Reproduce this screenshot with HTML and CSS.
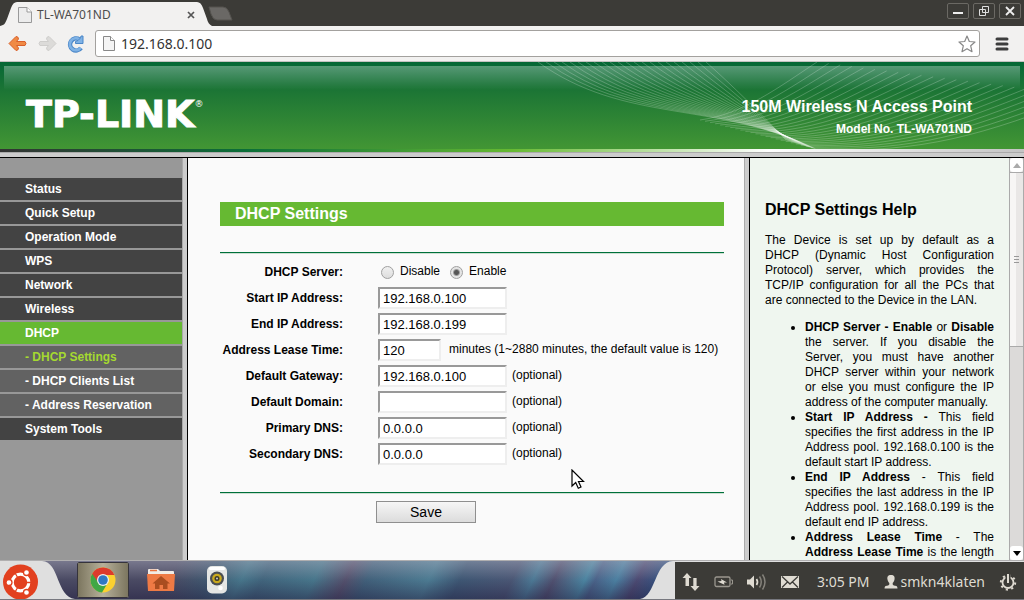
FILE: index.html
```html
<!DOCTYPE html>
<html lang="en">
<head>
    <meta charset="UTF-8">
    <meta name="viewport" content="width=device-width, initial-scale=1.0">
    <title>TL-WA701ND</title>
    <link rel="stylesheet" href="styles.css">
</head>
<body>
    <!-- Tab bar -->
    <div class="tabbar">
        <div class="tab">
            <svg class="tab-shape" width="212" height="26" viewBox="0 0 212 26"><path d="M0 26 C5 25 5 23 7 19 L11 8 Q13 2 17 2 H197 Q201 2 203 8 L207 19 Q208 24 212 26 Z" fill="#f2f1f0"/></svg>
            <svg class="page-icon" width="14" height="16" viewBox="0 0 14 16"><path d="M.5 .5 H9 L13.500 5 V15.500 H.5 Z" fill="#ececec" stroke="#999"/><path d="M9 .5 V5 H13.500" fill="#fff" stroke="#999"/></svg>
            <span class="tab-title">TL-WA701ND</span>
            <button class="tab-close" aria-label="Close tab"><svg width="8" height="8" viewBox="0 0 8 8"><path d="M1 1 L7 7 M7 1 L1 7" stroke="#555" stroke-width="1.700"/></svg></button>
        </div>
        <button class="new-tab" aria-label="New tab"><svg width="26" height="16" viewBox="0 0 26 16"><path d="M2 1 H16 Q20 1 22 6 L25 14 H10 Q6 14 4 8 Z" fill="#6a6865" stroke="#55534f"/></svg></button>
        <div class="window-buttons">
            <button aria-label="Minimize"><svg width="12" height="12" viewBox="0 0 12 12"><path d="M1 8 H11" stroke="#eee" stroke-width="2"/></svg></button>
            <button aria-label="Restore"><svg width="12" height="12" viewBox="0 0 12 12"><path d="M4.500 1.500 H10.500 V7.500 H4.500 Z M1.500 4.500 H7.500 V10.500 H1.500 Z" fill="none" stroke="#ddd"/></svg></button>
            <button aria-label="Close"><svg width="12" height="12" viewBox="0 0 12 12"><path d="M2 2 L10 10 M10 2 L2 10" stroke="#eee" stroke-width="1.800"/></svg></button>
        </div>
    </div>

    <!-- Toolbar -->
    <div class="toolbar">
        <button class="tool" aria-label="Back"><svg width="20" height="18" viewBox="0 0 20 18"><path d="M1 8.500 L8 1.500 Q10.500 1.500 10.500 4 L8.500 6.500 H17 Q19 8.500 17 10.500 H8.500 L10.500 13 Q10.500 15.500 8 15.500 Z" fill="#f08a45" stroke="#d9602a" stroke-linejoin="round"/></svg></button>
        <button class="tool" aria-label="Forward"><svg width="20" height="18" viewBox="0 0 20 18"><path d="M19 8.500 L12 1.500 Q9.500 1.500 9.500 4 L11.500 6.500 H3 Q1 8.500 3 10.500 H11.500 L9.500 13 Q9.500 15.500 12 15.500 Z" fill="#dcdbd9" stroke="#cfcecc" stroke-linejoin="round"/></svg></button>
        <button class="tool" aria-label="Reload"><svg width="20" height="18" viewBox="0 0 20 18"><path d="M15 13 A6 6 0 1 1 13.500 4.500" fill="none" stroke="#4b87c8" stroke-width="4.500"/><path d="M14.700 12.700 A6 6 0 1 1 13.500 4.500" fill="none" stroke="#7fb2e5" stroke-width="2.700"/><path d="M17 1 V8.500 H9.500 V6.500 L12 5.500 L14.500 3 L15 1 Z" fill="#7fb2e5" stroke="#4b87c8"/></svg></button>
        <div class="address">
            <svg width="12" height="15" viewBox="0 0 12 15"><path d="M.5 .5 H7.500 L11.500 4.500 V14.500 H.5 Z" fill="#f4f4f4" stroke="#888"/><path d="M7.500 .5 V4.500 H11.500" fill="#fff" stroke="#888"/></svg>
            <input type="text" aria-label="Address" value="192.168.0.100">
            <svg width="18" height="18" viewBox="0 0 18 18"><path d="M9 1 L11.300 6.500 L17 7 L12.700 10.800 L14 16.700 L9 13.700 L4 16.700 L5.300 10.800 L1 7 L6.700 6.500 Z" fill="#fff" stroke="#888" stroke-width="1.200" stroke-linejoin="round"/></svg>
        </div>
        <button class="menu-button" aria-label="Menu"><svg width="14" height="14" viewBox="0 0 14 14"><path d="M2 2 H12 M2 7 H12 M2 12 H12" stroke="#3d3d3d" stroke-width="3" stroke-linecap="round"/></svg></button>
    </div>

    <!-- Banner -->
    <header class="banner">
        <div class="shine"></div>
        <svg class="waves" id="waves" width="500" height="87" viewBox="0 0 500 87"></svg>
        <div class="logo">TP-LINK<sup>®</sup></div>
        <div class="product">
            <h1>150M Wireless N Access Point</h1>
            <p>Model No. TL-WA701ND</p>
        </div>
    </header>
    <div class="stripe"></div>
    <div class="frame-line"></div>

    <div class="content">
        <nav class="sidebar">
            <a href="#">Status</a>
            <a href="#">Quick Setup</a>
            <a href="#">Operation Mode</a>
            <a href="#">WPS</a>
            <a href="#">Network</a>
            <a href="#">Wireless</a>
            <a href="#" class="active">DHCP</a>
            <a href="#" class="sub current">- DHCP Settings</a>
            <a href="#" class="sub">- DHCP Clients List</a>
            <a href="#" class="sub">- Address Reservation</a>
            <a href="#">System Tools</a>
        </nav>

        <main class="main">
            <h2>DHCP Settings</h2>
            <form class="settings">
                <div class="fields">
                    <div class="row">
                        <span class="label" id="server">DHCP Server:</span>
                        <div class="radios" role="radiogroup" aria-labelledby="server">
                            <label><input type="radio" name="dhcp" value="0"> Disable</label>
                            <label><input type="radio" name="dhcp" value="1" checked> Enable</label>
                        </div>
                    </div>
                    <div class="row">
                        <label class="label" for="ip1">Start IP Address:</label>
                        <input type="text" id="ip1" value="192.168.0.100">
                    </div>
                    <div class="row">
                        <label class="label" for="ip2">End IP Address:</label>
                        <input type="text" id="ip2" value="192.168.0.199">
                    </div>
                    <div class="row">
                        <label class="label" for="lease">Address Lease Time:</label>
                        <input type="text" id="lease" class="short" value="120">
                        <span class="note">minutes (1~2880 minutes, the default value is 120)</span>
                    </div>
                    <div class="row">
                        <label class="label" for="gateway">Default Gateway:</label>
                        <input type="text" id="gateway" value="192.168.0.100">
                        <span class="note">(optional)</span>
                    </div>
                    <div class="row">
                        <label class="label" for="domain">Default Domain:</label>
                        <input type="text" id="domain" value="">
                        <span class="note">(optional)</span>
                    </div>
                    <div class="row">
                        <label class="label" for="dns1">Primary DNS:</label>
                        <input type="text" id="dns1" value="0.0.0.0">
                        <span class="note">(optional)</span>
                    </div>
                    <div class="row">
                        <label class="label" for="dns2">Secondary DNS:</label>
                        <input type="text" id="dns2" value="0.0.0.0">
                        <span class="note">(optional)</span>
                    </div>
                </div>
                <button type="button" class="save">Save</button>
            </form>
        </main>

        <aside class="help">
            <div class="help-text">
                <h2>DHCP Settings Help</h2>
                <p>The Device is set up by default as a DHCP&nbsp;(Dynamic Host Configuration Protocol) server, which provides the TCP/IP configuration for all the PCs that are&nbsp;connected to the Device in the LAN.</p>
                <ul>
                    <li><b>DHCP Server - Enable</b> or <b>Disable</b> the server. If you disable the Server, you must have another DHCP server within your network or else you must configure the IP address of the computer manually.</li>
                    <li><b>Start IP Address -</b> This field specifies the first address in the IP Address pool. 192.168.0.100 is the default start IP address.</li>
                    <li><b>End IP Address</b> - This field specifies the last address in the IP Address pool. 192.168.0.199 is the default end IP address.</li>
                    <li><b>Address Lease Time</b> - The <b>Address Lease Time</b> is the length</li>
                </ul>
            </div>
            <div class="scrollbar">
                <button type="button" aria-label="Scroll up"><svg width="8" height="5" viewBox="0 0 8 5"><path d="M4 0 L8 5 H0 Z" fill="#aaa"/></svg></button>
                <div class="thumb"><i></i><i></i><i></i></div>
                <div class="track"></div>
                <button type="button" aria-label="Scroll down"><svg width="8" height="5" viewBox="0 0 8 5"><path d="M4 5 L8 0 H0 Z" fill="#000"/></svg></button>
            </div>
        </aside>
    </div>

    <!-- Desktop panel -->
    <footer class="panel">
        <button class="launcher" aria-label="Applications">
            <svg width="75" height="38" viewBox="0 0 75 38">
                <path d="M0 0 H42 C60 1 56 36 75 38 H0 Z" fill="#dfdfdf"/>
                <circle cx="20.500" cy="21" r="17.500" fill="#e2401f"/>
                <circle cx="20.500" cy="21.500" r="8.300" fill="none" stroke="#fff" stroke-width="3.200"/>
                <path d="M20.500 21.500 H32 M20.500 21.500 L14.500 11 M20.500 21.500 L14.500 32" stroke="#e2401f" stroke-width="1.300"/>
                <g fill="#fff" stroke="#e2401f" stroke-width="1.300"><circle cx="9" cy="21.500" r="3"/><circle cx="26.500" cy="11.500" r="3"/><circle cx="26.500" cy="31.500" r="3"/></g>
            </svg>
        </button>
        <div class="dock">
            <button class="task open" aria-label="Chrome">
                <svg width="26" height="26" viewBox="0 0 26 26">
                    <circle cx="13" cy="13" r="12.500" fill="#fbd130"/>
                    <path d="M13 13 L2.200 6.700 A12.500 12.500 0 0 0 12 25.500 L18 15.500 Z" fill="#3fa745"/>
                    <path d="M2.200 6.700 A12.500 12.500 0 0 1 24.400 8 H13 L8 15 Z" fill="#dc3a2d"/>
                    <circle cx="13" cy="13" r="6" fill="#f2f2f2"/>
                    <circle cx="13" cy="13" r="4.800" fill="#2f78c4"/>
                </svg>
            </button>
            <button class="task" aria-label="Home folder">
                <svg width="28" height="24" viewBox="0 0 28 24">
                    <path d="M1 9 V2 Q1 1 2 1 H11 L13 3 H26 Q27 3 27 4 V9 Z" fill="#f1ece6"/>
                    <path d="M3 2.500 H10" stroke="#e9733f" stroke-width="1.500"/>
                    <path d="M0 6 H28 L27 23 H1 Z" fill="#ee7a45"/>
                    <path d="M14 8 L23 15.500 H20.500 V21 H16 V17 H12.500 V21 H8 V15.500 H5.500 Z" fill="#a94d20"/>
                </svg>
            </button>
            <button class="task" aria-label="Music">
                <svg width="20" height="28" viewBox="0 0 20 28">
                    <rect x="0" y="0" width="20" height="27.500" rx="5" fill="#e4e6e4"/>
                    <rect x="2" y="1" width="16" height="3" rx="1.500" fill="#fff"/>
                    <circle cx="10" cy="12.500" r="7" fill="#4a4e52"/>
                    <circle cx="10" cy="12.500" r="4.800" fill="#c9a91c"/>
                    <circle cx="10" cy="12.500" r="2.500" fill="#3c3a2a"/>
                    <circle cx="10" cy="12.500" r="1" fill="#ccc"/>
                    <circle cx="13.500" cy="22" r="2.300" fill="#fff"/>
                </svg>
            </button>
        </div>
        <svg class="dock-end" width="35" height="38" viewBox="0 0 35 38"><path d="M0 38 C16 36 14 1 33 0 H35 V38 Z" fill="#dfdfdf"/></svg>
        <div class="tray">
            <svg width="18" height="18" viewBox="0 0 18 18"><path d="M5 0 L9.500 5 H7 V13 H3.500 V5 H.5 Z M13 18 L8.500 13 H11.300 V5 H14.600 V13 H17.500 Z" fill="#dfdbd2"/></svg>
            <svg width="19" height="12" viewBox="0 0 19 12"><rect x="1" y="1" width="15" height="9.500" rx="1.500" fill="none" stroke="#9a978f" stroke-width="1.300"/><path d="M17 4 h1.500 v4 h-1.500" fill="none" stroke="#9a978f"/><path d="M3.500 5.500 L7.500 5 L7 3 L13 6.500 L10 6.500 L10.500 8.800 Z" fill="#dfdbd2"/></svg>
            <svg width="20" height="18" viewBox="0 0 20 18"><path d="M0 6.500 H3 L7 2.500 V15.500 L3 11.500 H0 Z" fill="#dfdbd2"/><path d="M9.500 6 Q11.500 9 9.500 12" fill="none" stroke="#dfdbd2" stroke-width="1.700"/><path d="M12.500 3.500 Q16 9 12.500 14.500 M15.500 1.500 Q20.500 9 15.500 16.500" fill="none" stroke="#85827b" stroke-width="1.500"/></svg>
            <svg width="18" height="12" viewBox="0 0 18 12"><rect width="18" height="12" fill="#dfdbd2"/><path d="M1 .5 L9 8 L17 .5 M1 11.500 L6.500 6 M17 11.500 L11.500 6" fill="none" stroke="#3c3b37" stroke-width="1.300"/></svg>
            <span class="clock">3:05 PM</span>
            <span class="user"><svg width="14" height="14" viewBox="0 0 14 14"><path d="M7 0 C3.800 0 3 2 3.500 4.500 C3.800 6.500 4.800 7.500 5.300 8 V9.500 Q5 10.500 1.500 11 Q.5 11.500 .5 13.500 H13.500 Q13.500 11.500 12.500 11 Q9 10.500 8.700 9.500 V8 C9.200 7.500 10.200 6.500 10.500 4.500 C11 2 10.200 0 7 0 Z" fill="#dfdbd2"/></svg>smkn4klaten</span>
            <svg width="18" height="18" viewBox="0 0 18 18"><circle cx="9" cy="9.500" r="5.500" fill="none" stroke="#dfdbd2" stroke-width="1.800"/><circle cx="9" cy="9.500" r="7.200" fill="none" stroke="#dfdbd2" stroke-width="2" stroke-dasharray="2.200 3.450"/><path d="M9 1 V10" stroke="#3c3b37" stroke-width="5"/><path d="M9 1 V10" stroke="#dfdbd2" stroke-width="2"/></svg>
        </div>
    </footer>

    <!-- Mouse pointer -->
    <svg class="pointer" width="14" height="21" viewBox="0 0 14 21"><path d="M1 1 V17 L4.700 13.500 L7.300 19.300 L10 18 L7.500 12.500 H12.500 Z" fill="#fff" stroke="#000" stroke-width="1.200"/></svg>

    <script src="script.js"></script>
</body>
</html>
```
FILE: styles.css
```css
body {
    font-family: 'Liberation Sans', Arial, sans-serif;
    font-size: 12px;
    margin: 0;
    height: 100vh;
    display: flex;
    flex-direction: column;
    overflow: hidden;
    color: #000;
    background-color: #fafafa;
}

button {
    font-family: inherit;
    border: none;
    padding: 0;
    background: none;
}

svg {
    display: block;
    flex-shrink: 0;
}

/* Browser window */
.tabbar {
    display: flex;
    align-items: flex-start;
    flex-shrink: 0;
    height: 26px;
    background: #3c3b37;
    font-family: 'Noto Sans', sans-serif;
}

.tab {
    position: relative;
    display: flex;
    align-items: center;
    box-sizing: border-box;
    width: 206px;
    height: 26px;
    padding: 4px 11px 0 18px;
    color: #4c4c4c;
}

.tab-shape {
    position: absolute;
    left: 0;
    top: 0;
}

.page-icon,
.tab-title,
.tab-close {
    position: relative;
}

.tab-title {
    flex: 1;
    margin-left: 5px;
    line-height: 20px;
}

.new-tab {
    margin: 6px 0 0 1px;
}

.window-buttons {
    display: flex;
    gap: 4px;
    margin: 3px 3px 0 auto;
}

.window-buttons button {
    display: flex;
    align-items: center;
    justify-content: center;
    width: 22px;
    height: 16px;
    box-sizing: border-box;
    border: 1px solid #6b6964;
    border-radius: 2px;
}

.toolbar {
    display: flex;
    align-items: center;
    flex-shrink: 0;
    height: 36px;
    box-sizing: border-box;
    padding: 0 15px 0 8px;
    gap: 9px;
    background: #f2f1f0;
    border-bottom: 1px solid #c4c2c0;
}

.address {
    display: flex;
    align-items: center;
    flex: 1;
    height: 27px;
    box-sizing: border-box;
    padding: 0 3px 0 7px;
    gap: 6px;
    background: #fff;
    border: 1px solid #a3a19e;
    border-radius: 3px;
}

.address input {
    flex: 1;
    border: none;
    padding: 0;
    font-family: 'Noto Sans', sans-serif;
    font-size: 14px;
    color: #333;
    background: none;
}

.menu-button {
    margin-left: 6px;
}

/* Router banner */
.banner {
    position: relative;
    display: flex;
    justify-content: space-between;
    flex-shrink: 0;
    height: 87px;
    box-sizing: border-box;
    padding: 35px 52px 0 26px;
    background: linear-gradient(#056735, #1c7535 33%, #429634);
    color: #fff;
}

.shine {
    position: absolute;
    left: 4px;
    right: 4px;
    top: 4px;
    height: 24px;
    background: linear-gradient(rgba(255, 255, 255, 0.32), rgba(255, 255, 255, 0));
}

.waves {
    position: absolute;
    right: 0;
    top: 0;
    fill: none;
    stroke: rgba(255, 255, 255, 0.22);
}

.logo {
    position: relative;
    display: flex;
    font-family: 'DejaVu Sans', sans-serif;
    font-weight: bold;
    font-size: 38px;
    line-height: 34px;
    -webkit-text-stroke: 1px #fff;
}

.logo sup {
    font-size: 9px;
    line-height: 14px;
    font-weight: normal;
    -webkit-text-stroke: 0;
}

.product {
    position: relative;
    text-align: right;
}

.product h1 {
    margin: 0;
    font-size: 16px;
    line-height: 20px;
}

.product p {
    margin: 5px 0 0;
    font-weight: bold;
    line-height: 14px;
}

.stripe {
    flex-shrink: 0;
    height: 3px;
    background: linear-gradient(90deg, #333, #0b6e38 24%, #66b932 50%, #fff 75%, #c4c4c4);
}

.frame-line {
    flex-shrink: 0;
    height: 4px;
    background: #ccc;
    border-top: 1px solid #aaa;
    border-bottom: 1px solid #000;
}

/* Frames */
.content {
    display: flex;
    flex: 1;
    min-height: 0;
}

.sidebar {
    flex-shrink: 0;
    width: 182px;
    padding-top: 20px;
    background: #989898;
    border-right: 1px solid #aaa;
}

.sidebar a {
    display: block;
    margin-bottom: 2px;
    padding-left: 25px;
    line-height: 22px;
    font-weight: bold;
    color: #fff;
    text-decoration: none;
    background: #434343;
}

.sidebar a.active {
    background: #66b932;
}

.sidebar a.sub {
    background: #626262;
}

.sidebar a.current {
    color: #a5d930;
}

.main {
    flex: 1;
    padding: 44px 20px 0 32px;
    background: #fafafa;
    border-left: 1px solid #000;
    border-right: 1px solid #aaa;
    box-shadow: -4px 0 #ccc;
    margin-left: 4px;
}

.main h2 {
    margin: 0 0 26px;
    padding-left: 15px;
    font-size: 16px;
    line-height: 24px;
    color: #fff;
    background: #66b932;
}

.fields {
    padding: 6px 0 25px;
    border-top: 1px solid #00703a;
    border-bottom: 1px solid #00703a;
    box-shadow: 0 1px #ccdfd2, inset 0 1px #ccdfd2;
}

.row {
    display: flex;
    align-items: center;
    height: 26px;
}

.label {
    width: 123px;
    margin-right: 35px;
    text-align: right;
    font-weight: bold;
    white-space: nowrap;
}

.row input[type="text"] {
    width: 129px;
    height: 22px;
    box-sizing: border-box;
    padding: 0 3px;
    border: 2px solid;
    border-color: #999 #eee #eee #999;
    font-family: inherit;
    font-size: 13px;
    background: #fff;
}

.row input.short {
    width: 63px;
}

.note {
    margin-left: 5px;
    line-height: 14px;
    padding-bottom: 2px;
    white-space: nowrap;
}

.short + .note {
    margin-left: 8px;
}

.radios {
    display: flex;
    gap: 10px;
    padding: 0 0 2px 3px;
}

.radios label {
    display: flex;
    align-items: center;
    gap: 6px;
    line-height: 14px;
}

.radios input {
    appearance: none;
    width: 13px;
    height: 13px;
    margin: 3px 0 0;
    border: 1px solid #a0a0a0;
    border-radius: 50%;
    background: linear-gradient(#f0f0f0, #ddd);
}

.radios input:checked {
    background: radial-gradient(circle, #555 0 2px, #e4e4e4 4px);
}

.save {
    display: block;
    width: 100px;
    height: 22px;
    margin: 8px 0 0 156px;
    border: 1px solid #8f8f8f;
    font-size: 14px;
    background: linear-gradient(#f6f6f6, #dcdcdc);
}

.help {
    display: flex;
    flex-shrink: 0;
    width: 274px;
    margin-left: 4px;
    border-left: 1px solid #000;
    box-shadow: -4px 0 #ccc;
    background: #eff6ef;
}

.help-text {
    flex: 1;
    padding: 42px 15px 0;
    overflow: hidden;
    line-height: 15px;
    text-align: justify;
}

.help-text h2 {
    margin: 0;
    font-size: 16px;
    line-height: 20px;
}

.help-text p {
    margin: 13px 0 12px;
}

.help-text ul {
    margin: 12px 0;
    padding-left: 40px;
}

.help-text li:last-child {
    text-align-last: justify;
}

.scrollbar {
    display: flex;
    flex-direction: column;
    width: 15px;
    box-sizing: border-box;
    border: solid #aaa;
    border-width: 0 1px;
    background: #dcdad9;
}

.scrollbar button {
    display: flex;
    align-items: center;
    justify-content: center;
    height: 14px;
    background: #fff;
    border-radius: 3px;
}

.thumb {
    display: flex;
    flex-direction: column;
    align-items: center;
    justify-content: center;
    gap: 2px;
    flex: 173;
    border: solid #aaa;
    border-width: 1px 0;
    background: linear-gradient(90deg, #f7f6f5 50%, #e9e7e6 50%);
}

.thumb i {
    width: 5px;
    height: 1px;
    background: #999;
}

.track {
    flex: 198;
}

/* Desktop panel */
.panel {
    display: flex;
    flex-shrink: 0;
    height: 38px;
    border-top: 1px solid #b0afb0;
    border-bottom: 1px solid #77787f;
    background: linear-gradient(rgba(190, 190, 205, 0.4), rgba(255, 255, 255, 0) 50%, rgba(30, 25, 60, 0.45)),
        linear-gradient(115deg, #4a4a63 0 17%, #3f5870 21%, #47758a 24%, #41647c 26%, #47758a 31%, #54506c 34%, #41607a 36%, #4c7a91 42%, #3e5673 45%, #4a5674 50%, #4c7894 52%, #50506f 54%, #4b84a0 57%, #4a6288 58%, #4b7fa0 60%, #4c4a72 62%, #2b5685 65%);
}

.dock {
    display: flex;
    align-items: center;
    flex: 1;
    padding-left: 2px;
    gap: 8px;
}

.task {
    display: flex;
    align-items: center;
    justify-content: center;
    width: 48px;
    height: 36px;
}

.task.open {
    width: 52px;
    box-sizing: border-box;
    border: 1px solid #d8d4c4;
    outline: 1px solid #35333b;
    outline-offset: -1px;
    border-radius: 2px;
    background: linear-gradient(90deg, #7c765f, #b6b09a 50%, #7c765f);
}

.tray {
    display: flex;
    align-items: center;
    box-sizing: border-box;
    padding: 2px 7px 0;
    gap: 14px;
    background: #3c3b37;
    border-top: 1px solid #dfdfdf;
    color: #dfdbd2;
    font-family: 'Noto Sans', sans-serif;
    font-size: 14px;
}

.clock {
    padding-left: 4px;
}

.user {
    display: flex;
    align-items: center;
    gap: 3px;
}

.pointer {
    position: absolute;
    left: 571px;
    top: 469px;
}
```
FILE: script.js
```js
// Fills the banner with two fans of thin curves, blending from one edge curve to the other
function drawFan(svg, from, to, count) {
    for (let i = 0; i < count; i++) {
        const t = i / (count - 1);
        const p = from.map((v, k) => v + (to[k] - v) * t);
        const path = document.createElementNS("http://www.w3.org/2000/svg", "path");
        path.setAttribute("d", `M${p[0]} ${p[1]} C${p[2]} ${p[3]} ${p[4]} ${p[5]} ${p[6]} ${p[7]}`);
        svg.appendChild(path);
    }
}

const waves = document.getElementById("waves");
drawFan(waves, [14, 0, 100, 62, 190, 38, 292, 87], [182, 0, 210, 25, 235, 50, 262, 78], 22);
drawFan(waves, [292, 87, 400, 92, 460, 72, 560, 34], [176, 58, 220, 52, 255, 25, 293, 0], 24);
```
